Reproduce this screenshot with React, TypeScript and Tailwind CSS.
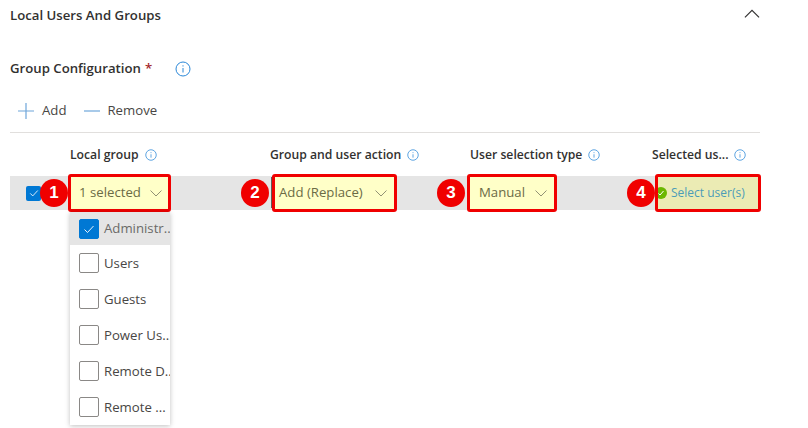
const groups = ["Users", "Guests", "Power Us...", "Remote D...", "Remote ..."];
const columns = ["Local group", "Group and user action", "User selection type", "Selected us..."];

function InfoIcon({ className }: { className: string }) {
  return (
    <svg viewBox="0 0 16 16" className={`shrink-0 text-[#2b88d8] ${className}`} fill="none" stroke="currentColor" strokeWidth="1">
      <circle cx="8" cy="8" r="7" />
      <path d="M8 7v4.5M8 4.3v1.2" />
    </svg>
  );
}

function Chevron({ up, className }: { up?: boolean; className: string }) {
  return (
    <svg viewBox="0 0 12 7" className={className} fill="none" stroke="currentColor" strokeWidth="0.9">
      <path d={up ? "M0.5 6.5 6 1l5.5 5.5" : "M0.5 0.5 6 6l5.5-5.5"} />
    </svg>
  );
}

function Badge({ n, className }: { n: number; className: string }) {
  return (
    <span className={`absolute top-[3px] z-10 flex size-[28px] items-center justify-center rounded-full bg-[#f00000] font-['Liberation_Sans',sans-serif] text-[17px] font-bold text-white ${className}`}>
      {n}
    </span>
  );
}

function CheckBox({ checked }: { checked?: boolean }) {
  return (
    <span className={`flex size-5 shrink-0 items-center justify-center rounded-[2px] border ${checked ? "border-[#0078d4] bg-[#0078d4]" : "border-[#8a8886] bg-white"}`}>
      {checked && (
        <svg viewBox="0 0 12 12" className="size-3 text-white" fill="none" stroke="currentColor" strokeWidth="0.9">
          <path d="M1.5 6.5 4.5 9.5 10.5 3" />
        </svg>
      )}
    </span>
  );
}

function Select({ label, className }: { label: string; className: string }) {
  return (
    <div className={`flex h-[38px] items-center justify-between rounded-[3px] border-[3px] border-[#f00000] bg-[#ffffc8] text-[#6b6b45] ${className}`}>
      <span>{label}</span>
      <Chevron className="h-[7px] w-[12px] text-[#85856a]" />
    </div>
  );
}

export default function App() {
  return (
    <div className="h-[428px] w-[808px] overflow-hidden bg-white pl-[10px] font-['Open_Sans',sans-serif] text-[13.2px] text-[#323130]">
      <div className="flex h-[32px] w-[750px] items-center justify-between">
        <h2 className="font-semibold">Local Users And Groups</h2>
        <Chevron up className="mb-[5px] h-[9px] w-[16px] text-[#323130]" />
      </div>
      <div className="mt-[27px] flex h-[20px] items-center font-semibold">
        Group Configuration <span className="ml-1 text-[#a4262c]">*</span>
        <InfoIcon className="ml-[23px] size-[16px]" />
      </div>
      <div className="mt-[20px] flex h-[24px] items-center pl-[8px] text-[#484644]">
        <svg viewBox="0 0 16 16" className="size-4 text-[#6ea6da]" fill="none" stroke="currentColor" strokeWidth="1.2">
          <path d="M8 0v16M0 8h16" />
        </svg>
        <span className="ml-[8px]">Add</span>
        <svg viewBox="0 0 16 16" className="ml-[18px] size-4 text-[#6ea6da]" fill="none" stroke="currentColor" strokeWidth="1.2">
          <path d="M0 8h16" />
        </svg>
        <span className="ml-[7px]">Remove</span>
      </div>
      <div className="mt-[9px] w-[750px] border-t border-[#e1dfdd]" />
      <div className="grid h-[43px] w-[750px] grid-cols-[60px_200px_200px_182px_108px] items-center pt-[2px] text-[12.2px] font-semibold">
        <span />
        {columns.map((c) => (
          <span key={c} className="flex items-center gap-[6px]">
            {c} <InfoIcon className="size-3" />
          </span>
        ))}
      </div>
      <div className="relative h-[34px] w-[750px] bg-[#e5e5e5]">
        <div className="absolute -top-[2px] left-0 grid w-full grid-cols-[58px_204px_195px_188px_106px]">
          <span className="flex h-[38px] items-center pl-[16px]">
            <span className="flex size-[15px] items-center justify-center rounded-[2px] bg-[#0078d4]">
              <svg viewBox="0 0 12 12" className="size-[10px] text-white" fill="none" stroke="currentColor" strokeWidth="1">
                <path d="M1.5 6.5 4.5 9.5 10.5 3" />
              </svg>
            </span>
          </span>
          <Select label="1 selected" className="w-[103px] pl-[8px] pr-[6px]" />
          <Select label="Add (Replace)" className="w-[125px] pl-[4px] pr-[7px]" />
          <Select label="Manual" className="w-[90px] pl-[9px] pr-[7px]" />
          <div className="flex h-[38px] items-center overflow-hidden rounded-[3px] border-[3px] border-[#f00000] bg-[#ebebb4] text-[12px] text-[#4b9cb8]">
            <svg viewBox="0 0 12 12" className="ml-[-3px] size-3 shrink-0" fill="none">
              <circle cx="6" cy="6" r="6" fill="#6bb700" />
              <path d="M3.5 6.5 5 8l3.5-4" stroke="white" strokeWidth="1" />
            </svg>
            <span className="ml-[4px] whitespace-nowrap">Select user(s)</span>
          </div>
        </div>
        <span className="absolute left-[261px] top-[1px] h-[31px] w-px bg-[#605e5c]" />
        <Badge n={1} className="left-[30px]" />
        <Badge n={2} className="left-[231px]" />
        <Badge n={3} className="left-[427px]" />
        <Badge n={4} className="left-[617px]" />
        <ul className="absolute left-[60px] top-[36px] w-[100px] overflow-hidden bg-white text-[#484644] shadow-[0_1px_5px_rgba(0,0,0,0.25)]">
          <li className="flex h-[33px] items-center gap-[5px] bg-[#e5e5e5] pl-[9px] text-[#6b6a68]">
            <CheckBox checked />
            <span className="mt-px whitespace-nowrap">Administr...</span>
          </li>
          {groups.map((g) => (
            <li key={g} className="flex h-[36px] items-center gap-[5px] pl-[9px]">
              <CheckBox />
              <span className="mt-px whitespace-nowrap">{g}</span>
            </li>
          ))}
        </ul>
      </div>
    </div>
  );
}
